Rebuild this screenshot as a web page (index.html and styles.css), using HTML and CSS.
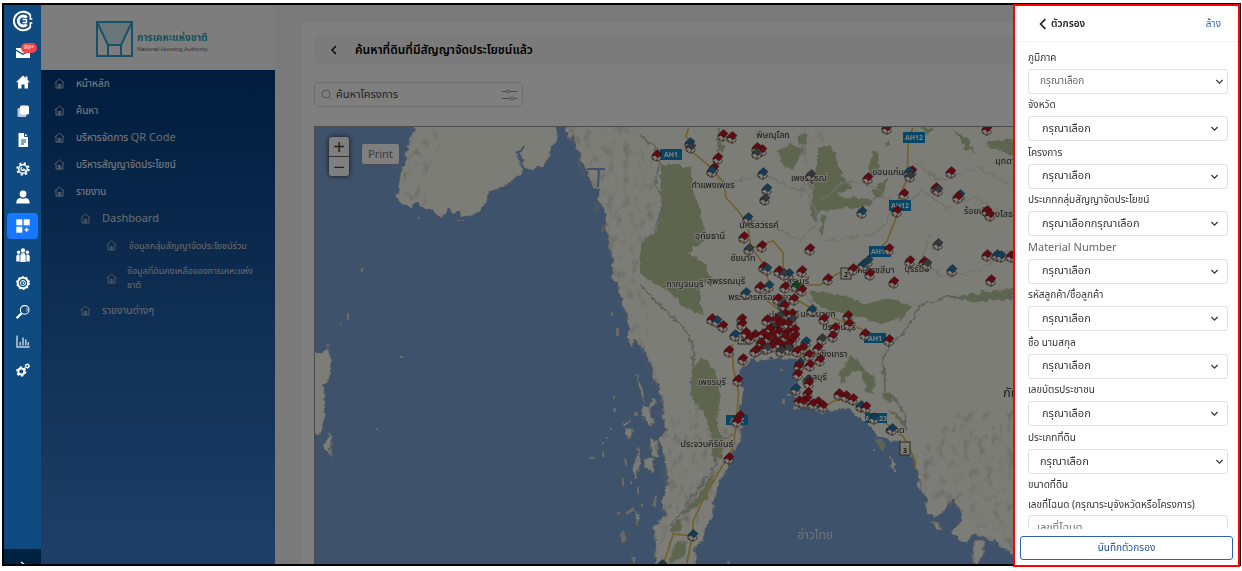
FILE: index.html
```html
<!DOCTYPE html>
<html lang="th">
<head>
<meta charset="utf-8">
<meta name="viewport" content="width=device-width, initial-scale=1">
<title>ค้นหาที่ดินที่มีสัญญาจัดประโยชน์แล้ว</title>
<link rel="stylesheet" href="styles.css">
</head>
<body>
<svg class="defs" aria-hidden="true">
  <symbol id="house" viewBox="0 0 12 12"><path d="M.7 5.600 6 1l5.300 4.600M2.200 4.600v6.400h7.600V4.600M4.600 11V7h2.800v4M6 7v4" fill="none" stroke="currentColor" stroke-width=".9"/></symbol>
  <symbol id="down" viewBox="0 0 10 10"><path d="m1.500 3.300 3.500 3.500 3.500-3.500" fill="none" stroke="currentColor" stroke-width="1.300"/></symbol>
  <symbol id="back" viewBox="0 0 10 10"><path d="M7 1 3 5l4 4" fill="none" stroke="currentColor" stroke-width="1.400"/></symbol>
</svg>
<div class="app">
  <nav class="rail" aria-label="แอป">
    <a class="brand" href="#" aria-label="หน้าแรก"><svg width="22" height="22" viewBox="0 0 22 22" fill="none" stroke="#fff"><path d="M18.500 5.200A9.300 9.300 0 1 0 18.500 16.800" stroke-width="2"/><path d="M14.800 7.500a5 5 0 1 0 0 7" stroke-width="2.800"/><path d="M10.500 9.500h4v3h-4" stroke-width="1.400"/><path d="M18.300 5v4h2M18.300 17v-4h2" stroke-width="1.600"/></svg></a>
    <a class="mail" href="#" aria-label="กล่องข้อความ"><svg width="14" height="11" viewBox="0 0 14 11" fill="#fff"><path d="M0 1h14v1.500L7 6.500 0 2.500zM0 4l7 4 7-4v7H0z"/></svg><span class="count">99+</span></a>
    <ul class="apps">
      <li><a href="#" aria-label="บ้าน"><svg viewBox="0 0 14 14" fill="#fff"><path d="M7 .5 0 7.300h2V13.500h3.500V9.500h3v4H12V7.300h2L11.500 4.800V1.500h-2v1.400z"/></svg></a></li>
      <li><a href="#" aria-label="ชุดเอกสาร"><svg viewBox="0 0 14 14"><rect x="1.500" y="4" width="9" height="9" rx="1.500" fill="#b9cbdc"/><rect x="4" y="1.500" width="9" height="9" rx="1.500" fill="#fff"/></svg></a></li>
      <li><a href="#" aria-label="เอกสาร"><svg viewBox="0 0 14 14"><path d="M2.500 0h6l3.500 3.500V14h-9.500z" fill="#fff"/><path d="M8.500 0v3.500H12M5 7h5M5 9h5M5 11h3" fill="none" stroke="#0f4a80"/></svg></a></li>
      <li><a href="#" aria-label="เครื่องมือ"><svg viewBox="0 0 14 14" fill="none" stroke="#fff"><circle cx="7" cy="7" r="4.300" stroke-width="1.600"/><circle cx="7" cy="7" r="5.700" stroke-width="2" stroke-dasharray="2.200 2.270"/><path d="M6.200 5.300a1.500 1.500 0 1 0 1.700 1.900l2.600 2.600" stroke-width="1.300"/></svg></a></li>
      <li><a href="#" aria-label="ผู้ใช้"><svg viewBox="0 0 14 14" fill="#fff"><circle cx="7" cy="4" r="3.400"/><path d="M.3 13.500c0-4 2-5.300 4-5.500 1.800 1 3.600 1 5.400 0 2 .2 4 1.500 4 5.500z"/></svg></a></li>
      <li><a class="active" href="#" aria-label="แดชบอร์ด"><svg viewBox="0 0 14 14" fill="#fff"><rect x=".3" y=".3" width="6" height="6"/><rect x="7.700" y=".3" width="6" height="6"/><rect x=".3" y="7.700" width="6" height="6"/><path d="M9.900 8.800h1.300v1.300h1.300v1.300h-1.300v1.300H9.900v-1.300H8.600v-1.300h1.300z"/></svg></a></li>
      <li><a href="#" aria-label="กลุ่ม"><svg viewBox="0 0 14 14" fill="#fff"><circle cx="7" cy="2.500" r="2.200"/><circle cx="2.600" cy="4.300" r="1.700"/><circle cx="11.400" cy="4.300" r="1.700"/><path d="M4.300 14V7.500L5.500 5.300h3l1.200 2.200V14zM.3 13.500V8l1-1.500h2.300V13.500zM13.700 13.500V8l-1-1.500h-2.300V13.500z"/></svg></a></li>
      <li><a href="#" aria-label="การเงิน"><svg viewBox="0 0 14 14" fill="none" stroke="#fff"><circle cx="7" cy="7" r="5.200" stroke-width="2"/><circle cx="7" cy="7" r="6.300" stroke-width="1.200" stroke-dasharray="2 1.960"/><circle cx="7" cy="7" r="2.500"/><path d="M7 5.500V7l1 1"/></svg></a></li>
      <li><a href="#" aria-label="ค้นหา"><svg viewBox="0 0 14 14" fill="none" stroke="#fff"><circle cx="8.700" cy="4.900" r="4.300" stroke-width="1.100"/><path d="M10.700 3.200a2.600 2.600 0 0 1 0 3.300" stroke-width=".8"/><path d="m5.600 8.200-5 5" stroke-width="2.200"/></svg></a></li>
      <li><a href="#" aria-label="สถิติ"><svg viewBox="0 0 14 14" fill="none" stroke="#c6d5e3" stroke-width="1.400"><path d="M1 1.500V13h12.500M4.200 11.500V8M7 11.500v-8M9.800 11.500V5.500M12.300 11.500V8"/></svg></a></li>
      <li><a href="#" aria-label="ตั้งค่า"><svg viewBox="0 0 14 14" fill="none" stroke="#fff"><circle cx="5.300" cy="8.500" r="3" stroke-width="2"/><circle cx="5.300" cy="8.500" r="4.400" stroke-width="1.600" stroke-dasharray="2.300 2.300"/><circle cx="11.300" cy="3" r="1.600" stroke-width="1.200"/><circle cx="11.300" cy="3" r="2.300" stroke-width=".8" stroke-dasharray="1.200 1.200"/></svg></a></li>
    </ul>
    <button class="expand" type="button" aria-label="ขยาย"><svg width="8" height="8" viewBox="0 0 8 8" fill="none" stroke="#fff" stroke-width="1.300"><path d="m2 1 4 3-4 3"/></svg></button>
  </nav>

  <div class="work">
    <aside class="side">
      <div class="org">
        <svg width="37" height="36" viewBox="0 0 37 36" fill="none" stroke="#28a5cf" stroke-width="2"><path d="M1 1 12 24h13L36 1z" fill="#d5edf4"/><path d="M1 1h35v34H1zM12 24v11M25 24v11"/></svg>
        <p class="org-name"><strong>การเคหะแห่งชาติ</strong><span>National Housing Authority</span></p>
      </div>
      <ul class="menu">
        <li><a href="#"><svg><use href="#house"/></svg><span>หน้าหลัก</span></a></li>
        <li><a href="#"><svg><use href="#house"/></svg><span>ค้นหา</span></a></li>
        <li><a href="#"><svg><use href="#house"/></svg><span>บริหารจัดการ <b>QR Code</b></span></a></li>
        <li><a href="#"><svg><use href="#house"/></svg><span>บริหารสัญญาจัดประโยชน์</span></a></li>
        <li><a href="#"><svg><use href="#house"/></svg><span>รายงาน</span></a></li>
        <li class="sub"><a href="#"><svg><use href="#house"/></svg><b>Dashboard</b></a></li>
        <li class="leaf"><a href="#"><svg><use href="#house"/></svg><span>ข้อมูลกลุ่มสัญญาจัดประโยชน์ร่วม</span></a></li>
        <li class="leaf tall"><a href="#"><svg><use href="#house"/></svg><span>ข้อมูลที่ดินคงเหลือของการเคหะแห่ง<br>ชาติ</span></a></li>
        <li class="sub"><a href="#"><svg><use href="#house"/></svg><span>รายงานต่างๆ</span></a></li>
      </ul>
    </aside>

    <main class="page">
      <section class="panel">
        <header class="bar"><a href="#" aria-label="ย้อนกลับ"><svg width="10" height="10"><use href="#back"/></svg></a><h1>ค้นหาที่ดินที่มีสัญญาจัดประโยชน์แล้ว</h1></header>
        <div class="search">
          <svg width="11" height="11" viewBox="0 0 11 11" fill="none" stroke="#aaa"><circle cx="5" cy="5" r="4"/><path d="m8 8 2.500 2.500"/></svg>
          <input type="text" placeholder="ค้นหาโครงการ" aria-label="ค้นหาโครงการ">
          <button type="button" aria-label="ตัวกรอง"><svg width="15" height="12" viewBox="0 0 15 12" fill="none" stroke="#999"><path d="M0 2.500h4M7 2.500h8M0 9.500h8M12 9.500h3"/><circle cx="5.500" cy="2.500" r="1.500"/><circle cx="10" cy="9.500" r="1.500"/></svg></button>
        </div>
        <div class="map">
          <svg class="chart" role="img" aria-label="แผนที่ประเทศไทย">
            <defs>
              <g id="pin"><path d="M-5 1-1-1 4 3v2l-4 2.500L-5 5z" fill="#fff" stroke="#444" stroke-width=".7"/><path d="M-3.500 4v2M0 4.500v2.500" stroke="#b8683c" stroke-width="1.400"/><path d="M.5-4.500 5-.5 1 4l-3-2.500L-5 2.500l1-3z" stroke="#222" stroke-opacity=".6" stroke-width=".7"/></g>
              <filter id="coast" x="0" y="0" width="1" height="1"><feTurbulence type="fractalNoise" baseFrequency=".16" numOctaves="3" seed="4"/><feDisplacementMap in="SourceGraphic" scale="7" xChannelSelector="R" yChannelSelector="G"/></filter>
              <filter id="relief" x="0" y="0" width="1" height="1"><feTurbulence type="fractalNoise" baseFrequency=".13 .09" numOctaves="3" seed="9"/><feColorMatrix values="0 0 0 0 .5  0 0 0 0 .5  0 0 0 0 .45  2.500 0 0 0 -1.250"/><feComposite in2="SourceGraphic" operator="in"/></filter>
            </defs>
            <g transform="translate(-315 -126)">
              <g class="land" filter="url(#coast)">
                <path d="M414 120v6l-4 17-3 4-2 16-4 5-4 30 4 4 6 0 4 6 5-8 9 8 18 8 6-8 4 5 5-2 4 5h11l12-13 5-11 12-7 13-7 8-7-4-10-3-11 4 3 3 12 8 4 12-4 7-10 2-10 5-7v-20z"/>
                <path d="M565 120v6l4 14 4-8 4 16 10 22 6 17 7 1-3 10 8 12 2 27 6 23-1 17 5 3 5 22 6 15v20l4 10 2-10 8 10 7 12 5 17 6 16 4 14-2 10 4 12-7 12 7 18 2 25-7 18 5 13-12 10 2 20-2 38h39v-10l3-15-3-8 8-8 5-15 7-10v-17l5-15 10-18 3-12 10-15 1-22-3-11 5-19-6-11 3-10 10-6 22-3 18 1 12 3-4 10-4 20-1 16 14-1 15 6 15-3 10-3 10 10 13 10 7 8 10 5h11l9 8 5 10 5 17 6 17 4 23 6 2 10-5 5-10 5-2 7 12v11l-10 9 10 8 7 3 3-10 20 7 23 15 30 14h230V120z"/>
                <path d="M312 352h5l12-4 2 14-2 16-5 8 1 28-5 20-8-1zM329 432l4 6-3 8 2 10-9-12zM976 538l8 2-2 16-6 12-4-18zM892 458l4 6-1 7-4-6zM876 436l6 5 3 7-6-3zM917 478l5 6v7l-4-4zM930 519l8 3 4 8-7-3z"/>
                <path d="M636 371l6 14 3 18-4-8zM642 403l7 4 6 16-8 2-5-10zM638 445l2 14-4 18-3-2 3-14zM645 457h9v14l-8-4zM621 422l10-4-7 8zM626 427l6 2-1 8-5-3zM650 438l8 4v16l-7-6zM633 507l6 8-1 12-3-14zM656 400l-6 10-1-8 5-6z"/>
              </g>
              <path class="islets" d="M360 269l4-3-2 6zM347 312h2v7h-2zM340 321h1v3h-1zM325 344l5-1-2 3zM400 355h3v2h-3zM376 427h2v2h-2zM589 456h6v2h-6zM602 451l2-1v6h-2zM602 441h2v2h-2zM613 395h2v3h-2zM613 407h3v4h-3zM606 436h2v2h-2zM610 427h2v2h-2zM602 225h1v6h-1zM611 311h2v4h-2zM616 327h3v8h-3zM634 411h4v4h-4zM624 456l3 4v6l-2-3zM622 477h2v8h-2zM630 480h2v3h-2zM637 486h2v7h-2zM641 503h2v3h-2zM617 511h4l-3 4zM625 512l8-6 1 3-7 5zM620 533l4-2 3 8-5 3zM622 532l4-2h-5zM631 556h5l-2 8zM657 494l-1 12-4-1 3-10zM787 393h4v2h-4zM782 398h3v5h-3zM873 448h2v2h-2zM889 455h2v3h-2zM727 560h3v3h-3zM934 521h4v2h-4zM780 368h3v2h-3zM418 216h2v2h-2zM457 219h7v1h-7z"/>
              <path class="relief" filter="url(#relief)" d="M565 126h75l24 60-20 100 20 140 30 138h-39l2-100-10-80-45-140-15-60-15-30zM405 160l30-34 10 0-20 80-24-8zM960 410l60 0v154l-20-14-40-40-35-15-10-40zM800 126h24v80h-24zM664 420l40-20 40 30-30 80-60 54z"/>
              <path class="inlet" d="M516 152l5-2 3-5M587 168h18M599 168l-1 18M557 142v10"/>
              <g class="green" filter="url(#coast)"><g transform="translate(640 120) scale(.333)">
                <path d="M62 130l90 6 8 70 24 70 18 80-60 40 50 30 24 46-38 30 12 80-62-26-40-48-70-32-18-24v-90l50-26 16-80z"/><path d="M415 85l40-15 35 14-14 30-20 36-30-20zM470 45l26-8 6 30-24 8zM535 80l40-5 34 90 30 40-48 10 24 20 40-4 40 4-4 20-60 6-90 6-20 40-8-40zM700 210l44-44-12 50-30 22z"/>
                <path d="M940 26l46 26 18 44-28-14zM1050 60l70-6v50l-80-30zM510 512l90 10 80 28 60-20 80 24-34 40-70 16-80-30-60-8-56-26zM930 530l190-30v34l-120 10zM700 90l20 10-8 40-32 60 8-56zM734 64l14-10 4 22-14 4zM840 16l40 8-16 16zM232 50l20 20-4 26-16-8zM230 20l12 4-4 14zM550 280l8 6-10 58-8-10z"/>
                <path transform="translate(0 660)" d="M152 90l30-40 40 34 20 80-14 90 24 40-8 60-30-10 2-46-12-60-50-70zM596 104l34-60 26 14 14 20 36 34-6 50-22-10-14-60-30 4-28 36zM726 154l28 6v22l-22-4zM708 290l28 20-6 20-18-10zM740 200l60 40-6 20zM230 380l-60 90-50 50 10 4 72-50zM90 560l40-30-6 40-26 4zM110 600l30 10-10 40-44 20z"/>
              </g></g>
              <g class="border" filter="url(#coast)"><g transform="translate(640 120) scale(.333)"><path d="M0 40l46 40 10 50-8 60 26 60-28 70 6 60M0 490l60 66 60 50 40 60v100l-10 60M1120 526l-100 4-80-4-100 30-30 60-50 50-30 40 6 100 60 70v50"/><path transform="translate(0 660)" d="M280 280l-50 30-2 60-80 110-60 80"/></g></g>
              <g class="minor" filter="url(#coast)"><g transform="translate(640 120) scale(.333)"><path d="M200 130l60 60 110-30 80 40 50 10 40 90-60 60-70-40-90-30M540 240l80-60 90 20 60 60-60 80-160 20M770 260l80-50 70 50 90-30 100 60M820 120l80 60 120-40 90 50M870 340l-20 80 60 50 110-20 90-60M420 500l80 20 30 50 60 10"/></g></g>
              <g class="road" transform="translate(640 120) scale(.333)"><path d="M146 20l-8 26 14 16 6 32 46 38 48 54 6 44 40 44 26 40 8 60 38 56 16 50-4 60 60 46M340 380l60-20 30 36v46M450 492h90l50-32 50-20 52-24 50-56 24-60 10-66 26-60 4-120 14-34M460 530l60 36 80 34 62 24 80 32"/><path transform="translate(0 660)" d="M276 10l4 70 16 76-6 84-10 80-40 68-46 80-34 74-4 50-16 78M156 586l-56-6-20 60-10 34M560 194l24-14 38-8 40 30 80 48 50 40 30 60 4 34M460 44l40 6"/></g>
              <g class="badges"><rect x="660" y="148" width="22" height="11"/><rect x="903" y="131" width="22" height="11"/><rect x="889" y="199" width="22" height="11"/><rect x="869" y="245" width="22" height="11"/><rect x="864" y="332" width="22" height="10"/><rect x="726" y="414" width="22" height="10"/><rect x="865" y="412" width="22" height="10"/></g>
              <g class="shield"><rect x="841" y="267" width="10" height="11"/><rect x="900" y="441" width="10" height="13"/><rect x="738" y="332" width="11" height="11"/></g>
              <g class="badge-text"><text x="671" y="156">AH1</text><text x="914" y="139">AH12</text><text x="900" y="207">AH12</text><text x="880" y="253">AH12</text><text x="875" y="340">AH1</text><text x="737" y="422">AH2</text><text x="876" y="420">AH123</text></g>
              <g class="shield-text"><text x="846" y="276">2</text><text x="905" y="452">3</text><text x="743" y="341">4</text></g>
              <g class="places"><text x="773" y="137">พิษณุโลก</text><text x="713" y="187">กำแพงเพชร</text><text x="809" y="180">เพชรบูรณ์</text><text x="888" y="174">ขอนแก่น</text><text x="1012" y="163">มุกดาหาร</text><text x="978" y="213">ร้อยเอ็ด</text><text x="1006" y="216">ยโสธร</text><text x="759" y="227">นครสวรรค์</text><text x="710" y="238">อุทัยธานี</text><text x="743" y="260">ชัยนาท</text><text x="685" y="286">กาญจนบุรี</text><text x="726" y="283">สุพรรณบุรี</text><text x="798" y="283">สระบุรี</text><text x="760" y="299">พระนครศรีอยุธยา</text><text x="873" y="272">นครราชสีมา</text><text x="917" y="271">บุรีรัมย์</text><text x="818" y="316">นครนายก</text><text x="784" y="317">ปทุมธานี</text><text x="839" y="329">ปราจีนบุรี</text><text x="829" y="356">ฉะเชิงเทรา</text><text x="817" y="379">ชลบุรี</text><text x="712" y="384">เพชรบุรี</text><text x="895" y="432">ตราด</text><text x="707" y="446">ประจวบคีรีขันธ์</text></g>
              <text class="country" x="1003" y="396">กัมพูชา</text>
              <text class="gulf" x="815" y="538">อ่าวไทย</text>
              <g id="pins"></g>
            </g>
          </svg>
          <div class="zoom"><button type="button">+</button><button type="button">−</button></div>
          <button class="print" type="button">Print</button>
        </div>
      </section>
    </main>
    <div class="shade"></div>
  </div>

  <form class="drawer">
    <header><button class="close" type="button"><svg width="12" height="12"><use href="#back"/></svg>ตัวกรอง</button><button class="clear" type="reset">ล้าง</button></header>
    <div class="scroll">
      <div class="fields">
        <div class="field native small"><label for="f1">ภูมิภาค</label><div class="pick"><select id="f1"><option>กรุณาเลือก</option></select><svg><use href="#down"/></svg></div></div>
        <div class="field"><label for="f2">จังหวัด</label><div class="pick"><select id="f2"><option>กรุณาเลือก</option></select><svg><use href="#down"/></svg></div></div>
        <div class="field"><label for="f3">โครงการ</label><div class="pick"><select id="f3"><option>กรุณาเลือก</option></select><svg><use href="#down"/></svg></div></div>
        <div class="field"><label for="f4">ประเภทกลุ่มสัญญาจัดประโยชน์</label><div class="pick"><select id="f4"><option>กรุณาเลือกกรุณาเลือก</option></select><svg><use href="#down"/></svg></div></div>
        <div class="field latin"><label for="f5">Material Number</label><div class="pick"><select id="f5"><option>กรุณาเลือก</option></select><svg><use href="#down"/></svg></div></div>
        <div class="field"><label for="f6">รหัสลูกค้า/ชื่อลูกค้า</label><div class="pick"><select id="f6"><option>กรุณาเลือก</option></select><svg><use href="#down"/></svg></div></div>
        <div class="field"><label for="f7">ชื่อ นามสกุล</label><div class="pick"><select id="f7"><option>กรุณาเลือก</option></select><svg><use href="#down"/></svg></div></div>
        <div class="field"><label for="f8">เลขบัตรประชาชน</label><div class="pick"><select id="f8"><option>กรุณาเลือก</option></select><svg><use href="#down"/></svg></div></div>
        <div class="field native"><label for="f9">ประเภทที่ดิน</label><div class="pick"><select id="f9"><option>กรุณาเลือก</option></select><svg><use href="#down"/></svg></div></div>
      </div>
      <p class="group">ขนาดที่ดิน</p>
      <div class="deed"><label for="deed">เลขที่โฉนด (กรุณาระบุจังหวัดหรือโครงการ)</label><input id="deed" type="text" placeholder="เลขที่โฉนด"></div>
    </div>
    <footer><button type="submit">บันทึกตัวกรอง</button></footer>
  </form>
</div>
<script src="pins.js"></script>
</body>
</html>
```
FILE: styles.css
```css
* { box-sizing: border-box; }
body {
  margin: 0;
  padding: 3px 1px 5px 2px;
  height: 100vh;
  background: #fff;
  font-family: "Noto Sans Thai", "Prompt", "Inter", "Noto Sans", sans-serif;
  font-size: 11px;
  line-height: 16px;
  color: #333;
}
ul, p, h1 { margin: 0; padding: 0; list-style: none; }
a { color: inherit; text-decoration: none; }
button, input, select { font: inherit; color: inherit; }
button { padding: 0; border: 0; background: none; }
.defs { position: absolute; width: 0; height: 0; }

.app {
  position: relative;
  display: flex;
  height: 100%;
  border: 2px solid #000;
}

/* Icon rail */
.rail {
  display: flex;
  flex-direction: column;
  width: 37px;
  background: #0f4a80;
  overflow: hidden;
}
.rail a { display: flex; align-items: center; justify-content: center; }
.brand { height: 32px; }
.mail { position: relative; height: 31px; }
.count {
  position: absolute;
  top: 6px;
  right: 4px;
  padding: 0 3px;
  border-radius: 6px;
  background: #f5434a;
  color: #fff;
  font-size: 6px;
  line-height: 10px;
}
.apps { display: grid; grid-auto-rows: 1fr; height: 316px; }
.apps li { display: grid; padding: 1px 3px; }
.apps svg { width: 14px; height: 14px; }
.apps .active { background: #1677ff; border-radius: 4px; }
.expand {
  display: flex;
  justify-content: center;
  align-items: flex-end;
  flex: none;
  height: 15px;
  margin-top: auto;
  background: #00213f;
}
.expand svg { margin-bottom: -5px; }

.work { position: relative; display: flex; flex: 1; min-width: 0; }
.shade { position: absolute; inset: 0; background: rgba(0, 0, 0, .5); }

/* Side menu */
.side {
  flex: none;
  width: 234px;
  background: linear-gradient(#003a7c 65px, #3c80d0);
  color: #fff;
}
.org {
  display: flex;
  align-items: center;
  gap: 4px;
  height: 65px;
  padding: 3px 0 0 55px;
  background: #fbfbfb;
}
.org-name { padding-top: 8px; color: #666; white-space: nowrap; }
.org-name strong { display: block; color: #28a5b8; font-size: 10px; line-height: 12px; }
.org-name span { display: block; font-family: "Liberation Sans", sans-serif; font-size: 6px; line-height: 10px; }
.menu a {
  display: flex;
  align-items: center;
  gap: 11px;
  min-height: 27px;
  padding-left: 13px;
  font-size: 10px;
  line-height: 14px;
  white-space: nowrap;
}
.menu b { font-size: 11px; font-weight: 400; color: #d8d8d8; }
.menu svg { flex: none; width: 11px; height: 11px; opacity: .8; }
.menu .sub a { padding-left: 39px; color: #d8d8d8; }
.menu .leaf a { gap: 12px; padding-left: 65px; color: #d8d8d8; font-size: 9px; }
.menu .tall a { gap: 10px; min-height: 38px; }

/* Page */
.page { flex: 1; min-width: 0; padding: 17px 0 0 26px; background: #f5f5f5; }
.panel {
  display: flex;
  flex-direction: column;
  height: 100%;
  padding: 13px 13px 0;
  border-radius: 5px 0 0;
  background: #fff;
}
.bar {
  display: flex;
  align-items: center;
  gap: 16px;
  height: 30px;
  padding-left: 15px;
  border-radius: 5px;
  background: #f7f7f7;
  color: #000;
}
.bar a { display: flex; }
.bar h1 { font-size: 12px; font-weight: 600; }
.search {
  display: flex;
  align-items: center;
  gap: 4px;
  width: 209px;
  height: 25px;
  margin: 17px 0 19px;
  padding: 0 5px 0 6px;
  border: 1px solid #ddd;
  border-radius: 5px;
}
.search svg { flex: none; display: block; }
.search input { flex: 1; min-width: 0; padding: 0; border: 0; outline: 0; background: none; }
.search input::placeholder { color: #444; opacity: 1; }

/* Map */
.map {
  position: relative;
  flex: 1;
  min-height: 0;
  border: 1px solid #999;
  border-bottom: 0;
  background: #7ea4d6;
  overflow: hidden;
}
.chart { display: block; width: 100%; height: 100%; }
.land { fill: #fbfaee; stroke: #b9c0b5; stroke-width: .6; }
.islets { fill: #d5d5c8; }
.relief { fill: #fff; opacity: .6; }
.inlet { fill: none; stroke: #7ea4d6; stroke-width: 2; }
.green { fill: #bccb9f; }
.border { fill: none; stroke: #bdbdb8; stroke-width: 5; }
.minor { fill: none; stroke: #dfded4; stroke-width: 4; }
.road { fill: none; stroke: #e3c05c; stroke-width: 5; }
.badges { fill: #0d8fce; }
.badge-text, .shield-text { font-size: 7px; font-weight: 700; text-anchor: middle; fill: #fff; }
.shield { fill: #f7f6ea; stroke: #555; }
.shield-text { fill: #333; }
.places { font-size: 9px; text-anchor: middle; fill: #333; stroke: #f7f6ea; stroke-width: 2; paint-order: stroke; }
.country { font-size: 13px; fill: #444; }
.gulf { font-size: 12px; text-anchor: middle; fill: #dce6f5; }
.zoom {
  position: absolute;
  top: 10px;
  left: 14px;
  display: grid;
  width: 20px;
  border-radius: 3px;
  background: #fff;
  box-shadow: 0 0 5px #222;
}
.zoom button { height: 19px; font: 20px/18px "Liberation Sans", sans-serif; color: #444; }
.zoom button + button { height: 20px; border-top: 1px solid #666; }
.print {
  position: absolute;
  top: 16px;
  left: 46px;
  padding: 1px 6px;
  border: 1px solid #999;
  border-radius: 3px;
  background: #fff;
  color: #777;
  font-family: "Noto Sans", sans-serif;
  line-height: 18px;
}

/* Filter drawer */
.drawer {
  position: absolute;
  top: -1px;
  right: -1px;
  bottom: -3px;
  display: flex;
  flex-direction: column;
  width: 227px;
  border: 2px solid #f00;
  background: #fff;
}
.drawer header {
  display: flex;
  justify-content: space-between;
  flex: none;
  height: 36px;
  padding: 0 17px 0 22px;
  border-bottom: 1px solid #f3f3f3;
  font-size: 10px;
}
.close { display: flex; align-items: center; gap: 2px; font-weight: 600; color: #222; }
.clear { color: #3567ab; }
.scroll { flex: 1; min-height: 0; padding: 4px 10px 0 13px; overflow: hidden; }
.fields { display: grid; grid-auto-rows: 1fr; height: 428px; }
.field { display: flex; flex-direction: column; justify-content: flex-end; font-size: 10px; }
.field label { line-height: 22px; }
.latin label { color: #666; font-size: 11px; }
.pick { position: relative; }
.pick select {
  display: block;
  width: 100%;
  height: 25px;
  padding: 0 24px 0 13px;
  border: 1px solid #dee2e6;
  border-radius: 3px;
  background: #fff;
  font-size: 11px;
  appearance: none;
}
.pick svg { position: absolute; top: 8px; right: 9px; width: 9px; height: 9px; pointer-events: none; }
.native select { padding-left: 11px; }
.native svg { right: 4px; stroke-width: 2px; }
.small select { font-size: 10px; color: #666; }
.group, .deed { font-size: 10px; line-height: 20px; }
.group { padding-top: 1px; }
.deed label { display: block; }
.deed input { width: 100%; height: 25px; padding: 0 8px; border: 1px solid #dee2e6; border-radius: 3px; font-size: 11px; }
.deed input::placeholder { color: #777; opacity: 1; }
.drawer footer { flex: none; padding: 7px 5px 5px; }
.drawer footer button {
  display: block;
  width: 100%;
  height: 24px;
  border: 1px solid #2f64ad;
  border-radius: 3px;
  color: #1f4f96;
  font-size: 10px;
}
```
FILE: pins.js
```js
const pins = {
  "#c31520": [[723,133],[732,135],[657,153],[718,156],[714,166],[757,146],[762,148],[868,176],[887,126],[987,127],[912,169],[951,170],[936,186],[904,192],[958,195],[897,209],[987,209],[990,213],[744,235],[762,244],[810,247],[889,247],[764,265],[779,269],[802,269],[828,277],[853,267],[870,272],[910,259],[924,260],[987,253],[1011,254],[991,278],[894,280],[760,285],[785,285],[802,288],[778,297],[794,297],[785,304],[824,317],[848,314],[849,322],[835,326],[833,334],[865,332],[889,338],[712,317],[723,324],[742,317],[742,322],[746,331],[767,318],[785,312],[792,312],[781,321],[776,318],[795,328],[788,330],[755,333],[763,332],[773,332],[770,327],[785,335],[792,338],[750,336],[761,341],[775,339],[780,342],[755,349],[783,347],[797,349],[803,346],[818,346],[729,349],[743,357],[757,348],[809,353],[820,358],[799,364],[810,363],[798,372],[809,381],[808,391],[799,399],[807,397],[818,400],[823,404],[839,392],[846,394],[853,397],[866,405],[738,378],[740,414],[737,419],[729,456],[768,336],[788,322],[779,330],[764,346],[772,344],[789,342],[795,334],[776,325],[803,400],[813,402]],
  "#2978ad": [[690,141],[712,169],[763,171],[767,187],[909,170],[960,193],[862,210],[748,216],[767,267],[789,272],[863,263],[868,259],[952,268],[997,253],[1001,254],[769,284],[746,291],[812,308],[717,319],[735,333],[806,340],[800,361],[796,387],[861,404],[874,416],[892,427],[693,533],[662,563]],
  "#6a7075": [[691,145],[757,151],[765,197],[811,173],[910,174],[938,188],[749,247],[938,242],[784,272],[927,262],[783,303],[822,337],[780,314],[792,318],[773,325],[767,346],[781,349],[789,347],[808,378]],
  "#218a35": [[796,284]]
};

const layer = document.getElementById("pins");
const all = Object.entries(pins).flatMap(([color, spots]) => spots.map(([x, y]) => ({ color, x, y })));
all.sort((a, b) => a.y - b.y).forEach(({ color, x, y }) => {
  const pin = document.createElementNS("http://www.w3.org/2000/svg", "use");
  pin.setAttribute("href", "#pin");
  pin.setAttribute("x", x);
  pin.setAttribute("y", y);
  pin.setAttribute("fill", color);
  layer.append(pin);
});
```
